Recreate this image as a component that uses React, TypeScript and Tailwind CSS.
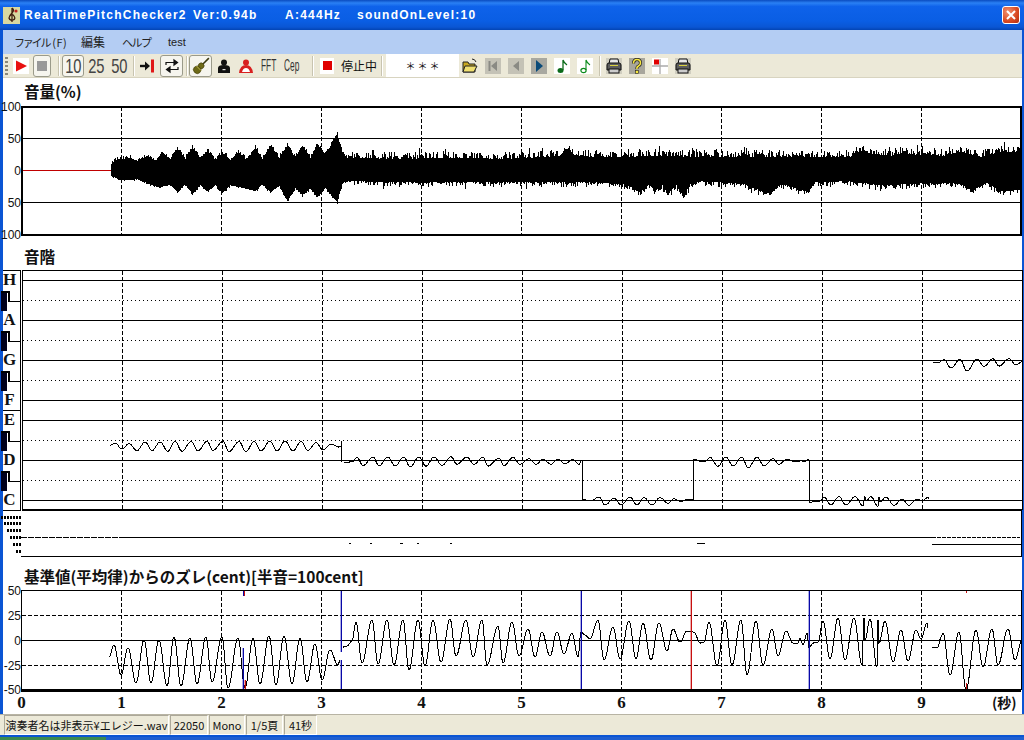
import React from "react";

type P = [number, number];

// pitch-deviation curve extrema (x, y in page pixels), one list per unbroken stretch
const seg1: P[] = [[109,657],[114,645],[121,675],[128,648],[136,683],[144,640],[151,683],[159,640],[167,686],[174,637],[181,686],[190,638],[197,684],[206,637],[212,682],[222,637],[228,688],[238,638],[245,688],[253,638],[260,684],[269,636],[276,685],[284,636],[292,684],[300,638],[307,682],[315,644],[322,680],[330,650],[338,665],[340,660]];
const seg2: P[] = [[343,647],[347,646],[352,641],[356,622],[362,663],[372,620],[378,664],[387,620],[394,665],[403,620],[409,670],[418,620],[425,666],[433,620],[441,662],[450,619],[456,656],[466,620],[473,657],[482,620],[487,665],[498,626],[503,663],[512,622],[519,656],[528,629],[535,657],[542,632],[550,656],[557,632],[564,654],[572,633],[578,657],[581,632],[585,635],[590,639],[598,620],[604,660],[613,627],[620,659],[629,621],[636,659],[643,623],[651,660],[659,623],[667,651],[673,629],[680,642],[687,631],[694,632],[700,643],[704,642],[709,622],[717,666],[725,620],[732,665],[741,620],[747,675],[756,621],[763,665],[772,629],[778,656],[786,631],[793,643],[798,643],[800,638],[803,645],[807,633],[809,648],[813,643],[818,642],[823,621],[830,659],[838,618],[845,660],[854,618],[862,665],[864,618],[865,640],[870,619],[877,667],[878,620],[879,643],[885,621],[893,662],[901,630],[908,661],[916,630],[921,639],[927,623],[928,628]];
const seg3: P[] = [[932,647],[938,647],[941,637],[943,633],[950,675],[959,632],[966,690],[976,630],[983,667],[992,629],[998,665],[1008,629],[1015,660],[1022,640]];

function curve(ext: P[]): P[] {
  const out: P[] = [];
  for (let i = 0; i < ext.length - 1; i++) {
    const [x0, y0] = ext[i];
    const [x1, y1] = ext[i + 1];
    const n = Math.max(1, Math.round((x1 - x0) * 2));
    for (let k = 0; k < n; k++) {
      const t = k / n;
      const e = (1 - Math.cos(Math.PI * t)) / 2;
      out.push([x0 + (x1 - x0) * t, y0 + (y1 - y0) * e]);
    }
  }
  out.push(ext[ext.length - 1]);
  return out;
}
const toPath = (pts: P[]) => "M" + pts.map(([x, y]) => `${x.toFixed(1)} ${y.toFixed(1)}`).join("L");

function base(x: number) {
  if (x < 340.5) return 442;
  if (x < 581) return 461;
  if (x < 692) return 501;
  if (x < 808) return 461;
  if (x < 931) return 501;
  return 361;
}
function pitchPath(ext: P[], from: number, to: number) {
  const pts = curve(ext).filter(([x]) => x >= from && x < to);
  return toPath(pts.map(([x, y]) => [x, base(x) + (y - 640) / 5] as P));
}

const upper: P[] = [[111,5],[115,10],[130,12],[137,8],[147,14],[155,9],[162,17],[170,11],[177,21],[185,11],[192,22],[200,12],[207,19],[215,10],[222,17],[230,10],[238,18],[246,10],[255,22],[262,11],[270,24],[279,12],[287,25],[295,12],[302,24],[310,12],[317,25],[325,15],[337,36],[342,16],[347,12],[400,11],[450,12],[500,11],[530,12],[560,14],[567,21],[575,14],[600,13],[625,13],[660,14],[700,13],[800,13],[850,13],[855,18],[890,14],[900,16],[950,14],[960,18],[980,13],[1000,18],[1022,17]];
const lower: P[] = [[111,5],[118,9],[130,10],[137,9],[147,13],[160,17],[170,14],[177,22],[185,14],[192,24],[200,15],[207,21],[215,15],[222,23],[230,15],[238,17],[255,20],[262,14],[270,22],[279,16],[287,31],[295,18],[302,25],[310,18],[317,27],[325,18],[337,32],[342,13],[347,11],[400,12],[500,12],[600,12],[625,14],[640,22],[648,14],[655,21],[662,15],[668,24],[675,14],[683,25],[690,14],[700,11],[740,13],[770,24],[780,13],[808,22],[815,12],[850,11],[880,15],[930,13],[960,13],[972,21],[985,12],[1000,21],[1022,19]];
function lerp(a: P[], x: number) {
  for (let i = 0; i < a.length - 1; i++) {
    if (x <= a[i + 1][0]) {
      const t = (x - a[i][0]) / (a[i + 1][0] - a[i][0]);
      return a[i][1] + (a[i + 1][1] - a[i][1]) * t;
    }
  }
  return a[a.length - 1][1];
}
let seed = 12345;
const rnd = () => {
  seed = (seed * 1103515245 + 12345) & 0x7fffffff;
  return seed / 0x7fffffff;
};
function wavePath() {
  let d = "";
  for (let x = 111; x < 1021; x++) {
    const noisy = x > 342 ? 1 : 0.45;
    const rr = rnd();
    const up = lerp(upper, x) + rr * rr * 7 * noisy + (x > 342 && rnd() > 0.92 ? 4 : 0);
    const lo = lerp(lower, x) + rnd() * rnd() * 6 * noisy + (x > 342 && rnd() > 0.95 ? 3 : 0);
    d += `M${x + 0.5} ${Math.round(170 - up)}V${Math.round(170 + lo)}`;
  }
  return d;
}
const WAVE = wavePath();

const secs = [121, 221, 321, 421, 521, 621, 721, 821, 921];
const label = { fontFamily: '"Liberation Sans", sans-serif', fontSize: 12 };

function VGrid({ y1, y2 }: { y1: number; y2: number }) {
  return (
    <>
      {secs.map((x) => (
        <line key={x} x1={x + 0.5} x2={x + 0.5} y1={y1} y2={y2} stroke="#000" strokeDasharray="4 2" />
      ))}
    </>
  );
}
function YLabels({ items }: { items: [string, number][] }) {
  return (
    <>
      {items.map(([t, y]) => (
        <text key={t + y} x={21} y={y + 4.5} textAnchor="end" style={label} fill="#111">
          {t}
        </text>
      ))}
    </>
  );
}

function VolumeChart() {
  return (
    <svg viewBox="3 100 1019 140" className="block h-[140px] w-[1019px] shrink-0 overflow-visible" shapeRendering="crispEdges">
      <YLabels items={[["100", 106], ["50", 138], ["0", 170], ["50", 202], ["100", 234]]} />
      <VGrid y1={107} y2={234} />
      {[138, 202].map((y) => (
        <line key={y} x1={22} x2={1021} y1={y + 0.5} y2={y + 0.5} stroke="#000" />
      ))}
      <line x1={22} x2={112} y1={170.5} y2={170.5} stroke="#c00000" />
      <path d={WAVE} stroke="#000" fill="none" />
      <rect x={21.5} y={106.5} width={999.5} height={128} fill="none" stroke="#000" strokeWidth={2} />
    </svg>
  );
}

function Keys() {
  const row = "flex h-[20px] items-center justify-center pr-[4px] pb-[3px] font-['Liberation_Serif',serif] text-[17px] font-bold leading-none text-[#111]";
  const Black = () => (
    <div className="flex h-[20px] -ml-[2px]">
      <div className="h-[20px] w-[7px] border-t-2 border-t-black bg-[#00001c]" />
      <div className="h-[20px] w-[1px] border-t-2 border-t-black bg-white" />
      <div className="flex h-[20px] w-[12px] flex-col">
        <div className="h-[10px] w-[2px] bg-black" />
        <div className="h-[1px] w-[12px] bg-black" />
      </div>
    </div>
  );
  return (
    <div className="mr-[1px] h-[241px] w-[18px] shrink-0 border-r border-t border-b border-black">
      <div className={row}>H</div>
      <Black />
      <div className={row}>A</div>
      <Black />
      <div className={row}>G</div>
      <Black />
      <div className={row + " border-b border-black"}>F</div>
      <div className={row}>E</div>
      <Black />
      <div className={row}>D</div>
      <Black />
      <div className={row}>C</div>
    </div>
  );
}

function PitchChart() {
  const solid = [280, 320, 360, 400, 420, 460, 500];
  const dotted = [300, 340, 380, 440, 480];
  return (
    <svg viewBox="21 270 1001 241" className="block h-[241px] w-[1001px] shrink-0" shapeRendering="crispEdges">
      {solid.map((y) => (
        <line key={y} x1={22} x2={1021} y1={y + 0.5} y2={y + 0.5} stroke="#000" />
      ))}
      {dotted.map((y) => (
        <line key={y} x1={22} x2={1021} y1={y + 0.5} y2={y + 0.5} stroke="#000" strokeDasharray="1 3" />
      ))}
      <VGrid y1={271} y2={509} />
      <path d={pitchPath(seg1, 109, 341)} stroke="#000" fill="none" />
      <path d={pitchPath(seg2, 341, 581)} stroke="#000" fill="none" />
      <path d={pitchPath(seg2, 581, 692)} stroke="#000" fill="none" />
      <path d={pitchPath(seg2, 692, 808)} stroke="#000" fill="none" />
      <path d={pitchPath(seg2, 808, 930)} stroke="#000" fill="none" />
      <path d={pitchPath(seg3, 932, 1021)} stroke="#000" fill="none" />
      <path d="M340.5 441V462M581.5 461V500M692.5 460V500M808.5 460V500" stroke="#000" fill="none" />
      <rect x={21.5} y={270.5} width={999.5} height={238.5} fill="none" stroke="#000" />
      <line x1={21} x2={1021} y1={509.5} y2={509.5} stroke="#000" strokeWidth={2} />
    </svg>
  );
}

function StripChart() {
  const rows: [number, number][] = [[517, 1], [523, 4], [530, 7], [537, 10], [544, 13], [551, 16]];
  return (
    <svg viewBox="3 511 1019 49" className="block h-[49px] w-[1019px] shrink-0 overflow-visible" shapeRendering="crispEdges">
      {rows.map(([y, x]) => (
        <line key={y} x1={x} x2={21} y1={y} y2={y} stroke="#000" strokeWidth={3} strokeDasharray="2 1" />
      ))}
      <line x1={21} x2={125} y1={537.5} y2={537.5} stroke="#000" strokeDasharray="6 1" />
      <line x1={125} x2={932} y1={537.5} y2={537.5} stroke="#000" />
      <line x1={932} x2={1020} y1={537.5} y2={537.5} stroke="#000" strokeDasharray="4 1" />
      <line x1={932} x2={1021} y1={544.5} y2={544.5} stroke="#000" />
      <line x1={21} x2={1022} y1={556.5} y2={556.5} stroke="#000" />
      <line x1={1021.5} x2={1021.5} y1={511} y2={557} stroke="#000" />
      <path d="M349 543.5h2M370 543.5h2M400 543.5h3M417 543.5h2M450 543.5h2M697 543.5h8" stroke="#000" />
    </svg>
  );
}

function DeviationChart() {
  return (
    <svg viewBox="3 584 1019 130" className="block h-[130px] w-[1019px] shrink-0 overflow-visible" shapeRendering="crispEdges">
      <YLabels items={[["50", 590], ["25", 615], ["0", 640], ["-25", 665], ["-50", 689]]} />
      <VGrid y1={591} y2={689} />
      <line x1={22} x2={1021} y1={640.5} y2={640.5} stroke="#000" />
      {[615, 665].map((y) => (
        <line key={y} x1={22} x2={1021} y1={y + 0.5} y2={y + 0.5} stroke="#000" strokeDasharray="4 2" />
      ))}
      <path d={toPath(curve(seg1))} stroke="#000" fill="none" />
      <path d={toPath(curve(seg2))} stroke="#000" fill="none" />
      <path d={toPath(curve(seg3))} stroke="#000" fill="none" />
      <rect x={21.5} y={590.5} width={999.5} height={99} fill="none" stroke="#000" />
      <path d="M341 591V652M341 660V689M581 591V689M809 591V689M243 648V689" stroke="#1818b0" strokeOpacity={0.35} strokeWidth={2} fill="none" />
      <path d="M691 591V689M245 680V689" stroke="#c81818" strokeOpacity={0.35} strokeWidth={2} fill="none" />
      <path d="M341.5 591V652M341.5 660V689M581.5 591V689M809.5 591V689M243.5 648V689M243.5 591V596" stroke="#0808a8" fill="none" />
      <path d="M691.5 591V689M245.5 680V689M244.5 591V596M966.5 683V689M966.5 591V593" stroke="#c81010" fill="none" />
      <line x1={21} x2={1021} y1={690} y2={690} stroke="#000" strokeWidth={3} />
      <g shapeRendering="auto" fill="#111" style={{ fontFamily: '"Liberation Serif", serif', fontSize: 17, fontWeight: 700 }}>
        {["0", "1", "2", "3", "4", "5", "6", "7", "8", "9"].map((t, i) => (
          <text key={t} x={21.5 + i * 100} y={708} textAnchor="middle">
            {t}
          </text>
        ))}
        <text x={992} y={708} style={{ fontFamily: '"Noto Sans CJK JP", sans-serif', fontSize: 14, fontWeight: 700 }}>
          (秒)
        </text>
      </g>
    </svg>
  );
}

const Sep = ({ c }: { c: string }) => <div className={"h-[20px] w-[2px] border-l border-r border-l-[#c8c4b0] border-r-white " + c} />;

function Ic({ c, bg, children }: { c: string; bg?: string; children: React.ReactNode }) {
  return (
    <div className={"flex h-[16px] w-[16px] shrink-0 items-center justify-center " + (bg ?? "") + " " + c}>
      <svg viewBox="0 0 16 16" className="h-[16px] w-[16px]">
        {children}
      </svg>
    </div>
  );
}
const boxed = "flex h-[22px] shrink-0 items-center justify-center rounded-[3px] border border-[#9a9a8a] bg-[#f6f5ee]";

const Printer = () => (
  <>
    <path d="M4 1h8l1 5H3z" fill="#e8e8e8" stroke="#111" />
    <path d="M1 7q0-2 2-2h10q2 0 2 2v5H1z" fill="#5c5c5c" stroke="#111" />
    <rect x="3" y="11" width="10" height="4" fill="#ccc" stroke="#111" />
    <rect x="4" y="7" width="8" height="1" fill="#d8d040" />
  </>
);

function Toolbar() {
  const num = "font-['Liberation_Sans',sans-serif] text-[21px] leading-none text-[#444] scale-x-[0.7] tracking-[-0.5px]";
  const narrow = "ml-[7px] flex w-[16px] items-center justify-center font-['Liberation_Sans',sans-serif] text-[16px] leading-none text-[#333]";
  return (
    <div className="flex h-[24px] shrink-0 items-center border-b border-[#d8d4c0] bg-[#ece9d8]">
      <div className="ml-[2px] h-[18px] w-[3px] bg-[repeating-linear-gradient(180deg,#8a8878_0px,#8a8878_2px,transparent_2px,transparent_4px)]" />
      <Ic c="ml-[5px]" bg="bg-[#fff]"><path d="M3 2.5 14 8 3 13.5z" fill="#e81010" /></Ic>
      <div className={boxed + " ml-[4px] w-[18px]"}><div className="h-[10px] w-[10px] bg-[#999]" /></div>
      <Sep c="ml-[7px]" />
      <div className={boxed + " ml-[2px] w-[22px]"}><span className={num}>10</span></div>
      <div className="ml-[3px] flex h-[22px] w-[19px] items-center justify-center"><span className={num}>25</span></div>
      <div className="ml-[4px] flex h-[22px] w-[19px] items-center justify-center"><span className={num}>50</span></div>
      <Sep c="ml-[4px]" />
      <Ic c="ml-[4px]"><path d="M1 8h7" stroke="#111" strokeWidth="2.4" /><path d="M6 3.5 11 8l-5 4.5z" fill="#111" /><rect x="12" y="1.5" width="3" height="13" fill="#e01818" /></Ic>
      <div className={boxed + " ml-[5px] w-[23px]"}>
        <svg viewBox="0 0 16 16" className="h-[16px] w-[16px]" fill="none" stroke="#111" strokeWidth="1.2">
          <path d="M2 7V4.5h10" /><path d="M10 2 13.5 4.5 10 7z" fill="#111" /><path d="M14 9v2.5H4" /><path d="M6 9 2.5 11.5 6 14z" fill="#111" />
        </svg>
      </div>
      <Sep c="ml-[3px]" />
      <div className={boxed + " ml-[1px] w-[23px]"}>
        <svg viewBox="0 0 16 16" className="h-[18px] w-[18px]">
          <path d="M9.5 6.5 15 1" stroke="#3a3a10" strokeWidth="1.4" />
          <g transform="rotate(45 6 10)" fill="#6e6a18" stroke="#3c3808" strokeWidth=".5">
            <ellipse cx="6" cy="7" rx="2.6" ry="2.6" />
            <ellipse cx="6" cy="12" rx="3.4" ry="3.2" />
          </g>
          <path d="M4 8l4 4" stroke="#c8c050" strokeWidth=".8" />
        </svg>
      </div>
      <Ic c="ml-[4px]"><circle cx="8" cy="4.5" r="3" fill="#111" /><path d="M2 15V10q0-3 6-3t6 3v5z" fill="#111" /><rect x="6.5" y="11" width="3" height="1.2" fill="#ddd" /></Ic>
      <Ic c="ml-[6px]"><circle cx="8" cy="4.5" r="3" fill="#d82020" /><path d="M1 15q1-8 7-8t7 8z" fill="#d82020" /><path d="M4 14q1-4 4-4t4 4z" fill="#fff" /></Ic>
      <div className={narrow}><span className="scale-x-[0.52] whitespace-nowrap">FFT</span></div>
      <div className={narrow}><span className="scale-x-[0.52] whitespace-nowrap">Cep</span></div>
      <Sep c="ml-[12px]" />
      <div className="ml-[6px] flex h-[16px] w-[14px] items-center justify-center bg-white"><div className="h-[9px] w-[9px] bg-[#e00000]" /></div>
      <div className="ml-[7px] w-[36px] whitespace-nowrap font-['Noto_Sans_CJK_JP',sans-serif] text-[12px] leading-none text-[#111]">停止中</div>
      <Sep c="ml-[4px]" />
      <div className="ml-[3px] flex h-[23px] w-[73px] items-center justify-center gap-[2px] bg-white font-['Noto_Sans_CJK_JP',sans-serif] text-[10px] leading-none text-[#111]"><span>＊</span><span>＊</span><span>＊</span></div>
      <Ic c="ml-[3px]"><path d="M1 4h5l1 2h6v8H1z" fill="#c8a820" stroke="#222" /><path d="M4 14 1 14l2-6h12l-3 6z" fill="#f0e070" stroke="#222" /><path d="M10 1q3 0 4 3" stroke="#222" fill="none" /></Ic>
      <Ic c="ml-[7px]" bg="bg-[#c4c2b6]"><rect x="3.5" y="3" width="2" height="10" fill="#8a8a84" /><path d="M12 3v10L6 8z" fill="#8a8a84" /></Ic>
      <Ic c="ml-[7px]" bg="bg-[#c4c2b6]"><path d="M11 3v10L5 8z" fill="#8a8a84" /></Ic>
      <Ic c="ml-[7px]" bg="bg-[#a8a8a0]"><path d="M5 2v12l7-6z" fill="#0a4a78" /></Ic>
      <Ic c="ml-[7px]" bg="bg-white"><ellipse cx="6.5" cy="12.5" rx="3" ry="2.5" fill="#0a6a1a" /><path d="M9 12V2q1 3 4 5" stroke="#0a6a1a" strokeWidth="1.3" fill="none" /></Ic>
      <Ic c="ml-[7px]" bg="bg-white"><ellipse cx="6.5" cy="12.5" rx="2.6" ry="2.1" fill="none" stroke="#0a8a1a" strokeWidth="1.2" /><path d="M9 12V2q1 3 4 5" stroke="#0a8a1a" strokeWidth="1.1" fill="none" /></Ic>
      <Sep c="ml-[6px]" />
      <Ic c="ml-[5px]" bg="bg-[#d0cec0]"><Printer /></Ic>
      <Ic c="ml-[7px]" bg="bg-[#a8a69c]"><path d="M4.5 5.5q0-4 3.5-4t3.5 3.5q0 2-2 3t-1.5 3" fill="none" stroke="#222" strokeWidth="3" /><path d="M4.5 5.5q0-4 3.5-4t3.5 3.5q0 2-2 3t-1.5 3" fill="none" stroke="#f8e840" strokeWidth="1.6" /><rect x="6.5" y="12.5" width="3" height="3" fill="#f8e840" stroke="#222" strokeWidth=".6" /></Ic>
      <Ic c="ml-[7px]" bg="bg-white"><path d="M0 8h16M8 1v15" stroke="#aaa" strokeWidth="1.3" /><rect x="2" y="1.5" width="5" height="5" fill="#e00000" /></Ic>
      <Ic c="ml-[7px]" bg="bg-[#d0cec0]"><Printer /></Ic>
    </div>
  );
}

const heading = "font-['Noto_Sans_CJK_JP',sans-serif] text-[15.5px] font-bold leading-none text-[#111] whitespace-nowrap";

export default function App() {
  const pane = "flex h-[20px] items-center justify-center border border-t-[#aca899] border-l-[#aca899] border-r-white border-b-white font-['Noto_Sans_CJK_JP',sans-serif] text-[11px] leading-none text-[#111] whitespace-nowrap";
  return (
    <div className="flex h-[740px] w-[1024px] flex-col overflow-hidden bg-[#0a55d4]">
      <div className="flex h-[30px] shrink-0 items-center bg-[linear-gradient(180deg,#0a4cc0_0%,#2a80f4_10%,#0e62ea_22%,#0a5ee4_70%,#0a56d4_90%,#0344b4_100%)] pl-[3px] font-['Liberation_Sans',sans-serif] text-[12px] font-bold tracking-[1.25px] text-white">
        <div className="flex h-[17px] w-[17px] items-center justify-center bg-[#d8d8a0]">
          <svg viewBox="0 0 16 16" className="h-[16px] w-[16px]">
            <path d="M8 1q3 2 0 5t-3 5q1 3 4 2t1-4-4 0M8 1v14" fill="none" stroke="#402010" strokeWidth="1.3" />
            <circle cx="12" cy="4" r="1.6" fill="#c02020" />
          </svg>
        </div>
        <span className="ml-[4px] w-[169px] whitespace-nowrap">RealTimePitchChecker2</span>
        <span className="w-[92px] whitespace-nowrap">Ver:0.94b</span>
        <span className="w-[72px] whitespace-nowrap">A:444Hz</span>
        <span className="whitespace-nowrap">soundOnLevel:10</span>
        <div className="ml-auto mr-[4px] flex h-[18px] w-[18px] items-center justify-center rounded-[3px] border border-white bg-[radial-gradient(circle_at_30%_30%,#f09070,#d84820_60%,#b02c10)]">
          <svg viewBox="0 0 12 12" className="h-[12px] w-[12px]"><path d="M2 2l8 8M10 2l-8 8" stroke="#fff" strokeWidth="2" /></svg>
        </div>
      </div>

      <div className="flex min-h-0 flex-1 flex-col border-l-[3px] border-r-[2px] border-[#0a55d4] bg-white">
        <div className="flex h-[24px] shrink-0 items-center bg-[#b4cdf3] font-['Noto_Sans_CJK_JP',sans-serif] text-[11px] leading-none text-[#222]">
          <span className="ml-[11px] w-[67px] whitespace-nowrap"><span className="tracking-[-2.2px]">ファイル</span><span className="ml-[3px] tracking-[0.5px]">(F)</span></span>
          <span className="w-[41px] whitespace-nowrap text-[12px]">編集</span>
          <span className="w-[46px] whitespace-nowrap tracking-[-1.5px]">ヘルプ</span>
          <span className="whitespace-nowrap font-['Liberation_Sans',sans-serif]">test</span>
        </div>
        <Toolbar />

        <div className={"flex h-[22px] shrink-0 items-center pl-[21px] pt-[5px] " + heading}>音量(%)</div>
        <VolumeChart />
        <div className={"flex h-[30px] shrink-0 items-center pl-[21px] pt-[3px] " + heading}>音階</div>
        <div className="flex h-[241px] shrink-0">
          <Keys />
          <PitchChart />
        </div>
        <StripChart />
        <div className={"flex h-[24px] shrink-0 items-center pl-[21px] pt-[10px] " + heading}>基準値(平均律)からのズレ(cent)[半音=100cent]</div>
        <DeviationChart />
      </div>

      <div className="flex h-[21px] shrink-0 items-center border-t border-[#b8b4a4] bg-[#ece9d8] pl-[3px]">
        <div className={pane + " ml-[1px] w-[165px]"}>演奏者名は非表示¥エレジー.wav</div>
        <div className={pane + " ml-[1px] w-[38px]"}>22050</div>
        <div className={pane + " ml-[1px] w-[36px]"}>Mono</div>
        <div className={pane + " ml-[1px] w-[37px]"}>1/5頁</div>
        <div className={pane + " ml-[1px] w-[33px]"}>41秒</div>
      </div>
      <div className="h-[2px] shrink-0 bg-[#0a55d4]" />
      <div className="flex h-[3px] shrink-0">
        <div className="w-[106px] bg-[#3c8a50]" />
        <div className="flex-1 bg-[#1f5fd0]" />
      </div>
    </div>
  );
}
